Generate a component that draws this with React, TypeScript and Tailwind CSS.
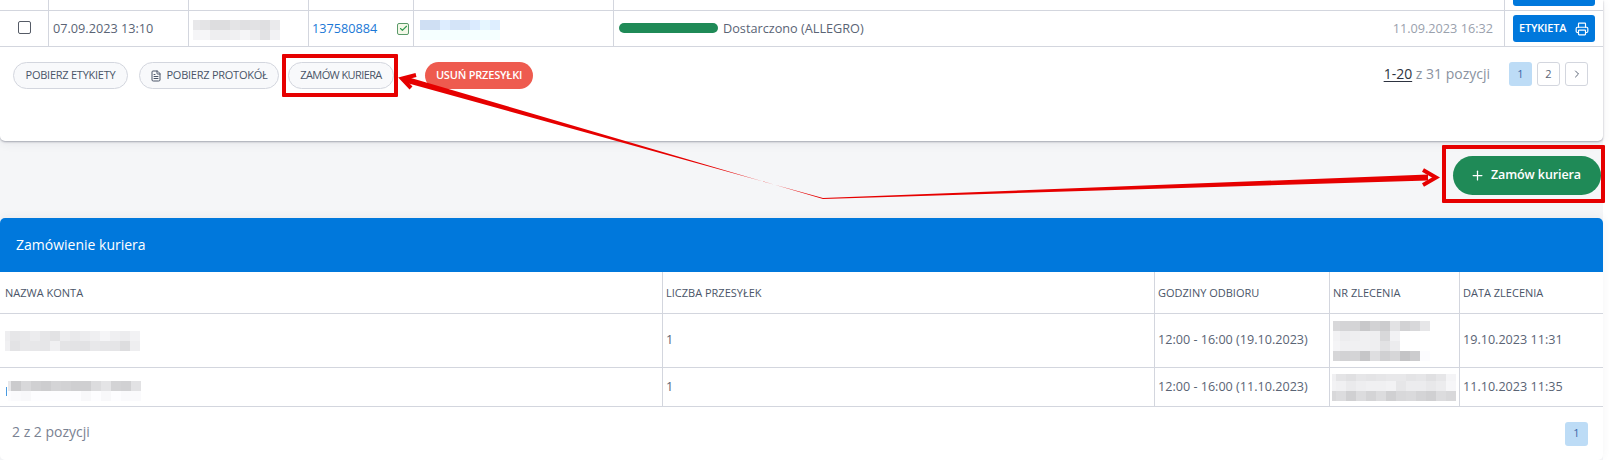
import { Plus, Printer, ChevronRight, FileText, Check } from "lucide-react";
import type { ReactNode } from "react";

const cell = "flex items-center border-r border-[#d3d6de] last:border-r-0";
const topCols = "grid grid-cols-[49px_140px_120px_105px_200px_891px_98px] border-b border-[#d3d6de]";

// pixelated block standing in for the censored values, clipped from top-left
function Blur({ rows, width, height, tint = false }: { rows: number[][]; width: number; height: number; tint?: boolean }) {
  return (
    <div className="flex flex-col items-end justify-end overflow-hidden" style={{ width, height }}>
      {rows.map((row, i) => (
        <div key={i} className="flex shrink-0">
          {row.map((v, j) => (
            <div
              key={j}
              className="h-[10px] w-[10px]"
              style={{ background: tint ? `rgb(${v - 28},${v - 12},${v + 8})` : `rgb(${v},${v},${v + 2})` }}
            />
          ))}
        </div>
      ))}
    </div>
  );
}

function PillButton({ className, children }: { className: string; children: ReactNode }) {
  return (
    <button
      className={`flex h-[27px] items-center justify-center gap-1 rounded-full border border-[#d3d6de] bg-[#f8f9fb] text-[11px] font-medium text-[#4a5568] ${className}`}
    >
      {children}
    </button>
  );
}

function PageButton({ label, active }: { label: ReactNode; active?: boolean }) {
  return (
    <div
      className={
        active
          ? "flex h-6 w-[23px] items-center justify-center rounded-[3px] bg-[#bddcf6] text-[11px] text-[#3a66a8]"
          : "flex h-6 w-[23px] items-center justify-center rounded-[3px] border border-[#d3d6de] text-[11px] text-[#5a6475]"
      }
    >
      {label}
    </div>
  );
}

function TopCard() {
  return (
    <section className="relative h-[141px] rounded-b-[5px] bg-white shadow-[0_1px_2px_rgba(60,65,85,0.4),0_3px_10px_rgba(60,65,85,0.08)]">
      <div className={`${topCols} h-[11px]`}>
        <div className={cell} />
        <div className={cell} />
        <div className={cell} />
        <div className={cell} />
        <div className={cell} />
        <div className={cell} />
        <div className="px-[8px]">
          <div className="h-[6px] w-[82px] rounded-b-[3px] bg-[#0078dc]" />
        </div>
      </div>
      <div className={`${topCols} h-[36px] text-[12.7px] text-[#5a6475]`}>
        <div className={`${cell} justify-center`}>
          <div className="mb-[3px] h-[13px] w-[13px] rounded-[2px] border border-[#555b66] bg-white" />
        </div>
        <div className={`${cell} pl-[4px]`}>07.09.2023 13:10</div>
        <div className={`${cell} pl-[4px]`}>
          <div className="mt-[3px]">
            <Blur
              width={87}
              height={20}
              rows={[
                [232, 228, 221, 221, 228, 224, 226, 223, 234],
                [245, 246, 238, 238, 240, 245, 238, 226, 242],
              ]}
            />
          </div>
        </div>
        <div className={`${cell} justify-between pr-[4px] pl-[3px] text-[#1a78d6]`}>
          <span>137580884</span>
          <span className="flex h-[12px] w-[12px] items-center justify-center rounded-[2px] border border-[#5a9a6a] bg-[#f4f8e8]">
            <Check size={9} strokeWidth={3} className="text-[#2f9a50]" />
          </span>
        </div>
        <div className={`${cell} pl-[6px]`}>
          <div className="mt-[3px]">
            <Blur
              width={80}
              height={20}
              tint
              rows={[
                [235, 235, 249, 240, 240, 247, 258, 250],
                [273, 273, 273, 273, 273, 273, 273, 273],
              ]}
            />
          </div>
        </div>
        <div className={`${cell} justify-between pr-[11px] pl-[5px]`}>
          <div className="flex items-center gap-[5px]">
            <div className="h-[10px] w-[99px] rounded-full bg-[#1f8a57]" />
            <span>Dostarczono (ALLEGRO)</span>
          </div>
          <span className="text-[#9aa1ad]">11.09.2023 16:32</span>
        </div>
        <div className="flex items-center px-[8px]">
          <button className="flex h-[27px] w-[82px] items-center justify-between rounded-[3px] bg-[#0078dc] pr-[6px] pl-[6px] text-[11px] font-semibold tracking-[-0.2px] text-white">
            ETYKIETA
            <Printer size={14} />
          </button>
        </div>
      </div>
      <div className="flex items-start justify-between pt-[15px] pr-[15px] pl-[13px]">
        <div className="flex">
          <PillButton className="w-[115px] tracking-[-0.25px]">POBIERZ ETYKIETY</PillButton>
          <div className="ml-[11px]">
            <PillButton className="w-[140px] tracking-[-0.25px]">
              <FileText size={12} />
              POBIERZ PROTOKÓŁ
            </PillButton>
          </div>
          <div className="ml-[9px]">
            <PillButton className="w-[106px] tracking-[-0.6px]">ZAMÓW KURIERA</PillButton>
          </div>
          <button className="ml-[31px] h-[27px] w-[108px] rounded-full bg-[#ee5b4f] text-[11px] font-semibold tracking-[-0.2px] text-white">
            USUŃ PRZESYŁKI
          </button>
        </div>
        <div className="flex items-center">
          <span className="mr-[19px] text-sm text-[#8a92a0]">
            <span className="text-[#2d3340] underline underline-offset-2">1-20</span> z 31 pozycji
          </span>
          <div className="flex gap-[5px]">
            <PageButton label="1" active />
            <PageButton label="2" />
            <PageButton label={<ChevronRight size={12} />} />
          </div>
        </div>
      </div>
    </section>
  );
}

function CourierCard() {
  const cols = "grid grid-cols-[663px_492px_175px_130px_143px] border-b border-[#d3d6de]";
  return (
    <section className="overflow-hidden rounded-[5px] bg-white shadow-[0_-2px_8px_rgba(60,65,85,0.06)]">
      <div className="flex h-[54px] items-center bg-[#0078dc] pl-4 text-sm text-white">Zamówienie kuriera</div>
      <div className={`${cols} h-[42px] text-[11px] font-medium text-[#4a5568]`}>
        <div className={`${cell} pt-px pl-[5px]`}>NAZWA KONTA</div>
        <div className={`${cell} pt-px pl-[3px]`}>LICZBA PRZESYŁEK</div>
        <div className={`${cell} pt-px pl-[3px]`}>GODZINY ODBIORU</div>
        <div className={`${cell} pt-px pl-[3px]`}>NR ZLECENIA</div>
        <div className={`${cell} pt-px pl-[3px]`}>DATA ZLECENIA</div>
      </div>
      <div className={`${cols} h-[54px] text-[12.6px] text-[#5a6475]`}>
        <div className={`${cell} pl-[5px]`}>
          <Blur
            width={135}
            height={20}
            rows={[
              [238, 238, 230, 232, 236, 230, 226, 237, 233, 236, 239, 245, 239, 236, 242],
              [240, 240, 227, 232, 231, 230, 240, 228, 227, 226, 232, 230, 229, 221, 238],
            ]}
          />
        </div>
        <div className={`${cell} pl-[3px]`}>1</div>
        <div className={`${cell} pl-[3px]`}>12:00 - 16:00 (19.10.2023)</div>
        <div className={`${cell} pl-[3px]`}>
          <Blur
            width={97}
            height={40}
            rows={[
              [216, 212, 212, 200, 210, 204, 226, 210, 216, 230],
              [242, 236, 238, 240, 238, 216, 242, 255, 255, 255],
              [244, 240, 240, 240, 238, 226, 236, 255, 255, 255],
              [214, 210, 212, 198, 222, 208, 214, 196, 204, 252],
            ]}
          />
        </div>
        <div className={`${cell} pl-[3px]`}>19.10.2023 11:31</div>
      </div>
      <div className={`${cols} h-[39px] text-[12.6px] text-[#5a6475]`}>
        <div className={`${cell} pl-[6px]`}>
          <div className="mt-[8px] mr-px h-[9px] w-px self-center bg-[#4a9ae0]" />
          <div className="mt-[8px]">
            <Blur
              width={133}
              height={20}
              rows={[
                [232, 232, 203, 216, 208, 205, 212, 210, 207, 207, 220, 228, 211, 209, 226],
                [252, 252, 250, 248, 253, 253, 253, 253, 253, 248, 253, 248, 253, 250, 250],
              ]}
            />
          </div>
        </div>
        <div className={`${cell} pl-[3px]`}>1</div>
        <div className={`${cell} pl-[3px]`}>12:00 - 16:00 (11.10.2023)</div>
        <div className={`${cell} pl-[2px]`}>
          <Blur
            width={124}
            height={27}
            rows={[
              [240, 228, 224, 230, 228, 230, 232, 232, 228, 230, 224, 230, 244],
              [242, 240, 234, 238, 240, 240, 242, 230, 236, 236, 232, 236, 246],
              [216, 220, 208, 220, 212, 220, 208, 216, 218, 212, 208, 220, 216],
            ]}
          />
        </div>
        <div className={`${cell} pl-[3px]`}>11.10.2023 11:35</div>
      </div>
      <div className="flex h-[53px] items-center justify-between pr-[15px] pl-[12px]">
        <span className="mb-1 text-sm text-[#7a8292]">2 z 2 pozycji</span>
        <PageButton label="1" active />
      </div>
    </section>
  );
}

// red marks drawn over the screenshot
function Annotations() {
  return (
    <>
      <div className="absolute top-[54px] left-[282px] h-[43px] w-[116px] rounded-[1px] border-[4px] border-[#e60000]" />
      <div className="absolute top-[145px] left-[1442px] h-[58px] w-[163px] rounded-[1px] border-[4px] border-[#e60000]" />
      <svg className="absolute top-0 left-0" width="1610" height="460" viewBox="0 0 1610 460" fill="none">
        <path d="M823 198 L1428 174.5 L1428 180.5 L823 199 Z" fill="#e60000" />
        <path d="M1423 170 L1436 177.5 L1423 185" stroke="#e60000" strokeWidth="4" />
        <path d="M823 199 L405.8 76.5 L404.2 82.3 L823 198 Z" fill="#e60000" />
        <path d="M416 75 L402 78.5 L411 88" stroke="#e60000" strokeWidth="4" />
      </svg>
    </>
  );
}

export default function App() {
  return (
    <div className="relative h-[460px] w-[1610px] overflow-hidden bg-white font-['Open_Sans',sans-serif]">
      <div className="h-[460px] w-[1603px] bg-[#f5f6f8]">
        <TopCard />
        <div className="flex h-[77px] items-start justify-end pt-[15px] pr-[2px]">
          <button className="flex h-[39px] w-[148px] items-center justify-center gap-[6px] rounded-full bg-[#1f8a57] pr-[3px] text-[12.5px] font-semibold tracking-[-0.1px] text-white">
            <Plus size={15} />
            Zamów kuriera
          </button>
        </div>
        <CourierCard />
      </div>
      <Annotations />
    </div>
  );
}
